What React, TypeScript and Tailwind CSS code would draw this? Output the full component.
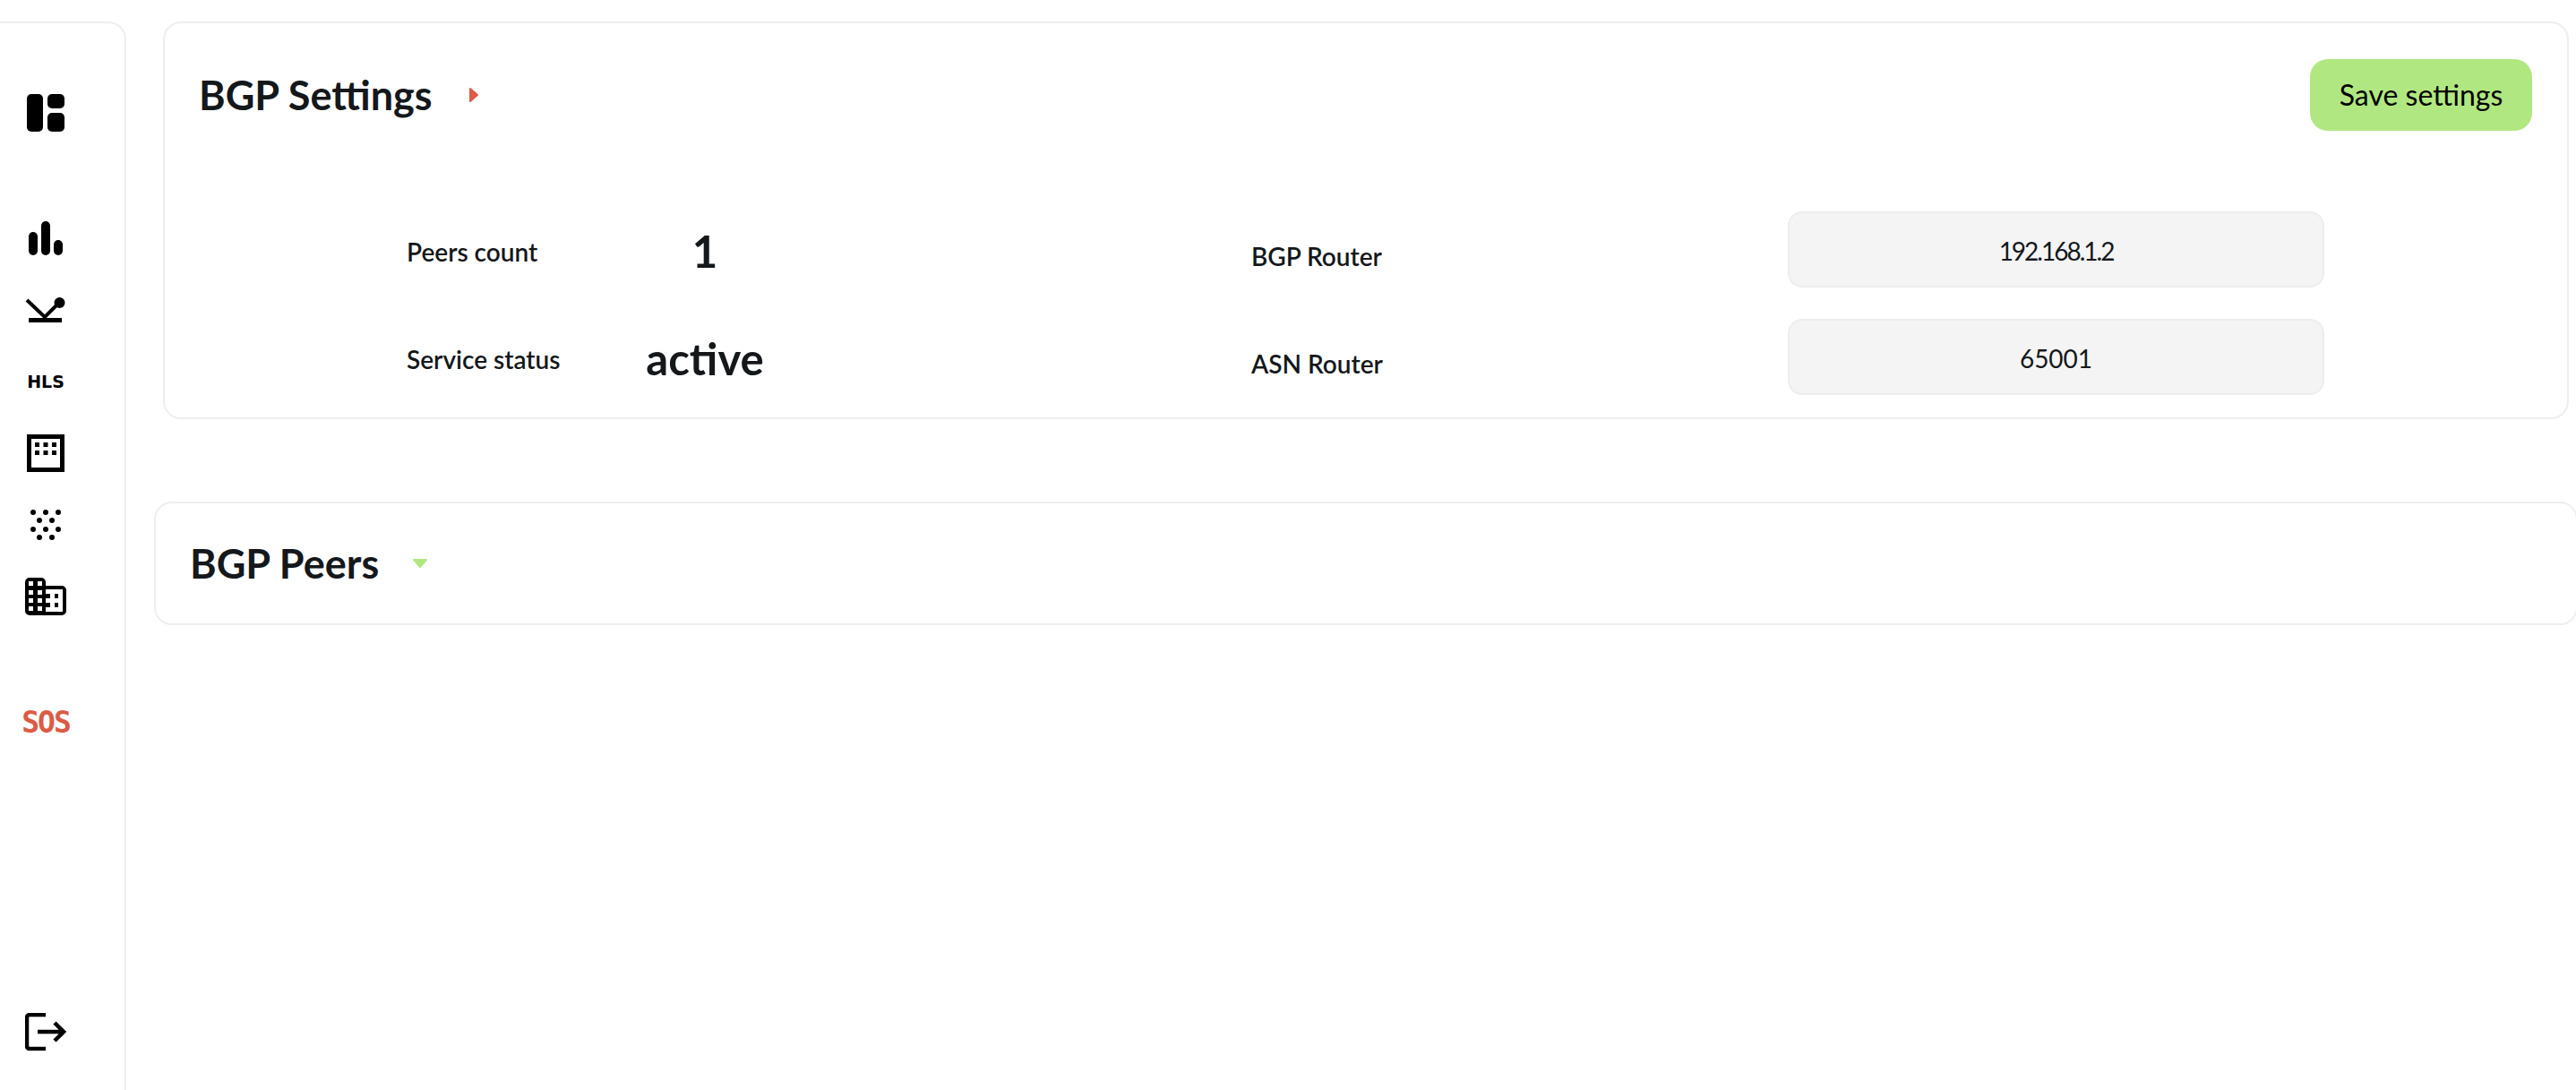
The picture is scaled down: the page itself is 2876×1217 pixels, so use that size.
import React from "react";

const Dashboard = () => (
  <svg width="42" height="42" viewBox="0 0 42 42" className="mt-[79px] block">
    <rect x="0" y="0" width="18" height="42" rx="5" fill="#000" />
    <rect x="23" y="0" width="19" height="16" rx="5" fill="#000" />
    <rect x="23" y="21" width="19" height="21" rx="5" fill="#000" />
  </svg>
);

const Bars = () => (
  <svg width="38" height="38" viewBox="0 0 38 38" className="mt-[100px] block">
    <rect x="0" y="12" width="10" height="26" rx="5" fill="#000" />
    <rect x="14" y="0" width="10" height="38" rx="5" fill="#000" />
    <rect x="28" y="21" width="10" height="17" rx="5" fill="#000" />
  </svg>
);

const Antenna = () => (
  <svg width="46" height="30" viewBox="0 0 46 30" className="mt-[47px] block">
    <path d="M2 3 L22 22 L38 6" fill="none" stroke="#000" strokeWidth="4" />
    <circle cx="38.5" cy="6" r="6" fill="#000" />
    <rect x="4" y="23" width="37" height="5" fill="#000" />
  </svg>
);

const Calendar = () => (
  <svg width="42" height="42" viewBox="0 0 42 42" className="mt-[52px] block">
    <rect x="2.500" y="2.500" width="37" height="37" fill="none" stroke="#000" strokeWidth="5" />
    <rect x="9" y="9" width="5" height="5" fill="#000" />
    <rect x="18.500" y="9" width="5" height="5" fill="#000" />
    <rect x="28" y="9" width="5" height="5" fill="#000" />
    <rect x="9" y="18" width="5" height="5" fill="#000" />
    <rect x="18.500" y="18" width="5" height="5" fill="#000" />
    <rect x="28" y="18" width="5" height="5" fill="#000" />
  </svg>
);

const Dots = () => (
  <svg width="34" height="38" viewBox="0 0 34 38" className="mt-[42px] block">
    {[[3, 3], [17, 3], [31, 3], [10, 12], [24, 12], [3, 22], [17, 22], [31, 22], [10, 31], [24, 31]].map(([x, y]) => (
      <circle key={`${x}-${y}`} cx={x} cy={y} r="3" fill="#000" />
    ))}
  </svg>
);

const Building = () => (
  <svg width="46" height="42" viewBox="0 0 46 42" className="mt-[38px] block">
    <path d="M5 0 H18 A5 5 0 0 1 23 5 V9 H41 A5 5 0 0 1 46 14 V37 A5 5 0 0 1 41 42 H5 A5 5 0 0 1 0 37 V5 A5 5 0 0 1 5 0 Z" fill="#000" />
    {[4, 14, 23, 32].map((y) =>
      [4, 14].map((x) => <rect key={`${x}-${y}`} x={x} y={y} width="5" height="5" fill="#fff" />)
    )}
    <rect x="23" y="13" width="19" height="25" fill="#fff" />
    <rect x="23" y="18" width="5" height="5" fill="#000" />
    <rect x="23" y="28" width="5" height="5" fill="#000" />
    <rect x="33" y="18" width="4" height="5" fill="#000" />
    <rect x="33" y="28" width="4" height="5" fill="#000" />
  </svg>
);

const Logout = () => (
  <svg width="46" height="42" viewBox="0 0 46 42" className="mt-auto mb-[44px] block">
    <path d="M23 2 H5 A3 3 0 0 0 2 5 V37 A3 3 0 0 0 5 40 H23" fill="none" stroke="#000" strokeWidth="4.500" />
    <path d="M14 21 H43 M33 11 L43 21 L33 31" fill="none" stroke="#000" strokeWidth="4.500" />
  </svg>
);

const Sidebar = () => (
  <div className="w-[141px] shrink-0 mt-6 border-t-2 border-r-2 border-[#eeeeee] rounded-tr-[20px] flex flex-col items-center pr-[37px]">
    <Dashboard />
    <Bars />
    <Antenna />
    <div className="mt-[57px] h-[14px] flex items-center font-['DejaVu_Sans',sans-serif] font-bold text-[19px] leading-none text-black">HLS</div>
    <Calendar />
    <Dots />
    <Building />
    <div className="mt-[107px] h-[24px] flex items-center font-['DejaVu_Sans_Mono',monospace] font-bold text-[33px] leading-none tracking-[-2px] text-[#dc5b45]">SOS</div>
    <Logout />
  </div>
);

const StatRow = ({ label, value }: { label: string; value: string }) => (
  <div className="flex items-center h-[85px]">
    <div className="w-[190px] pt-[5px] text-[28px] font-['Lato_Semibold','Lato',sans-serif]">{label}</div>
    <div className="w-[286px] pt-1 text-center text-[49px] leading-none font-bold">{value}</div>
  </div>
);

const FieldRow = ({ label, value, spacing }: { label: string; value: string; spacing?: string }) => (
  <div className="flex items-center h-[85px]">
    <div className="w-[599px] pt-[14px] text-[28px] font-['Lato_Semibold','Lato',sans-serif]">{label}</div>
    <div className={`w-[599px] h-[85px] pt-[2px] flex items-center justify-center rounded-[16px] border-2 border-[#ededed] bg-[#f4f4f4] text-[28px] ${spacing ?? ""}`}>{value}</div>
  </div>
);

export default function App() {
  return (
    <div className="flex h-screen overflow-hidden bg-white text-[#14181b] font-['Lato',sans-serif]">
      <Sidebar />
      <div className="flex-1 min-w-0 pt-6">
        {/* settings */}
        <div className="ml-[41px] mr-2 h-[444px] border-2 border-[#eeeeee] rounded-[20px]">
          <div className="flex items-center justify-between pt-[40px] pl-[38px] pr-[39px]">
            <div className="flex items-center">
              <h1 className="text-[45px] font-bold leading-none">BGP Settings</h1>
              <svg width="10" height="16" viewBox="0 0 10 16" className="ml-[41px] block">
                <path d="M1 1 L9 8 L1 15 Z" fill="#dc5b45" stroke="#dc5b45" strokeWidth="2" strokeLinejoin="round" />
              </svg>
            </div>
            <button className="w-[248px] h-[80px] rounded-[20px] bg-[#b1e781] text-black text-[32px]">Save settings</button>
          </div>
          <div className="mt-[90px] pl-[270px] flex">
            <div className="flex flex-col gap-[35px]">
              <StatRow label="Peers count" value="1" />
              <StatRow label="Service status" value="active" />
            </div>
            <div className="ml-[467px] flex flex-col gap-[35px]">
              <FieldRow label="BGP Router" value="192.168.1.2" spacing="tracking-[-2px]" />
              <FieldRow label="ASN Router" value="65001" />
            </div>
          </div>
        </div>
        {/* peers */}
        <div className="ml-[31px] mr-[-2px] mt-[92px] h-[138px] border-2 border-[#eeeeee] rounded-[20px] flex items-center pl-[38px]">
          <h2 className="text-[45px] font-bold leading-none">BGP Peers</h2>
          <svg width="16" height="10" viewBox="0 0 16 10" className="ml-[38px] block">
            <path d="M1 1 H15 L8 9 Z" fill="#b1e781" stroke="#b1e781" strokeWidth="2" strokeLinejoin="round" />
          </svg>
        </div>
      </div>
    </div>
  );
}
